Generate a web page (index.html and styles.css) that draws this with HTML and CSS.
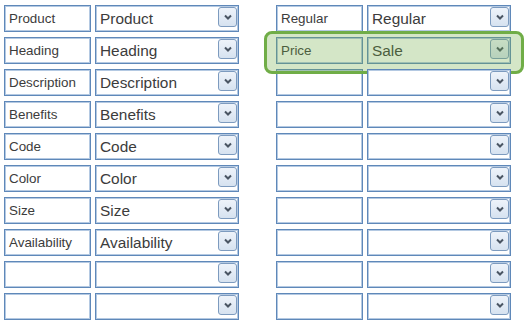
FILE: index.html
```html
<!DOCTYPE html>
<html>
<head>
    <title>Field Mapping</title>
    <link rel="stylesheet" href="styles.css">
</head>
<body>
    <div class="mapping">
        <div class="column">
            <div class="row"><div class="box name">Product</div><div class="box pick">Product<span class="arrow"><svg viewBox="0 0 8 6"><path d="M1 1.5 L4 4.5 L7 1.5" /></svg></span></div></div>
            <div class="row"><div class="box name">Heading</div><div class="box pick">Heading<span class="arrow"><svg viewBox="0 0 8 6"><path d="M1 1.5 L4 4.5 L7 1.5" /></svg></span></div></div>
            <div class="row"><div class="box name">Description</div><div class="box pick">Description<span class="arrow"><svg viewBox="0 0 8 6"><path d="M1 1.5 L4 4.5 L7 1.5" /></svg></span></div></div>
            <div class="row"><div class="box name">Benefits</div><div class="box pick">Benefits<span class="arrow"><svg viewBox="0 0 8 6"><path d="M1 1.5 L4 4.5 L7 1.5" /></svg></span></div></div>
            <div class="row"><div class="box name">Code</div><div class="box pick">Code<span class="arrow"><svg viewBox="0 0 8 6"><path d="M1 1.5 L4 4.5 L7 1.5" /></svg></span></div></div>
            <div class="row"><div class="box name">Color</div><div class="box pick">Color<span class="arrow"><svg viewBox="0 0 8 6"><path d="M1 1.5 L4 4.5 L7 1.5" /></svg></span></div></div>
            <div class="row"><div class="box name">Size</div><div class="box pick">Size<span class="arrow"><svg viewBox="0 0 8 6"><path d="M1 1.5 L4 4.5 L7 1.5" /></svg></span></div></div>
            <div class="row"><div class="box name">Availability</div><div class="box pick">Availability<span class="arrow"><svg viewBox="0 0 8 6"><path d="M1 1.5 L4 4.5 L7 1.5" /></svg></span></div></div>
            <div class="row"><div class="box name"></div><div class="box pick"><span class="arrow"><svg viewBox="0 0 8 6"><path d="M1 1.5 L4 4.5 L7 1.5" /></svg></span></div></div>
            <div class="row"><div class="box name"></div><div class="box pick"><span class="arrow"><svg viewBox="0 0 8 6"><path d="M1 1.5 L4 4.5 L7 1.5" /></svg></span></div></div>
        </div>

        <div class="column">
            <div class="row"><div class="box name">Regular</div><div class="box pick">Regular<span class="arrow"><svg viewBox="0 0 8 6"><path d="M1 1.5 L4 4.5 L7 1.5" /></svg></span></div></div>
            <div class="row selected"><div class="box name">Price</div><div class="box pick">Sale<span class="arrow"><svg viewBox="0 0 8 6"><path d="M1 1.5 L4 4.5 L7 1.5" /></svg></span></div><div class="highlight"></div></div>
            <div class="row"><div class="box name"></div><div class="box pick"><span class="arrow"><svg viewBox="0 0 8 6"><path d="M1 1.5 L4 4.5 L7 1.5" /></svg></span></div></div>
            <div class="row"><div class="box name"></div><div class="box pick"><span class="arrow"><svg viewBox="0 0 8 6"><path d="M1 1.5 L4 4.5 L7 1.5" /></svg></span></div></div>
            <div class="row"><div class="box name"></div><div class="box pick"><span class="arrow"><svg viewBox="0 0 8 6"><path d="M1 1.5 L4 4.5 L7 1.5" /></svg></span></div></div>
            <div class="row"><div class="box name"></div><div class="box pick"><span class="arrow"><svg viewBox="0 0 8 6"><path d="M1 1.5 L4 4.5 L7 1.5" /></svg></span></div></div>
            <div class="row"><div class="box name"></div><div class="box pick"><span class="arrow"><svg viewBox="0 0 8 6"><path d="M1 1.5 L4 4.5 L7 1.5" /></svg></span></div></div>
            <div class="row"><div class="box name"></div><div class="box pick"><span class="arrow"><svg viewBox="0 0 8 6"><path d="M1 1.5 L4 4.5 L7 1.5" /></svg></span></div></div>
            <div class="row"><div class="box name"></div><div class="box pick"><span class="arrow"><svg viewBox="0 0 8 6"><path d="M1 1.5 L4 4.5 L7 1.5" /></svg></span></div></div>
            <div class="row"><div class="box name"></div><div class="box pick"><span class="arrow"><svg viewBox="0 0 8 6"><path d="M1 1.5 L4 4.5 L7 1.5" /></svg></span></div></div>
        </div>
    </div>
</body>
</html>
```

FILE: styles.css
```css
* {
    margin: 0;
    padding: 0;
    box-sizing: border-box;
    font-family: "Liberation Sans", Arial, sans-serif;
}

body {
    background-color: #fff;
    overflow: hidden;
}

.mapping {
    display: flex;
    gap: 37px;
    padding: 5px 0 0 4px;
}

.column {
    display: flex;
    flex-direction: column;
    gap: 5px;
}

.row {
    display: flex;
    gap: 4px;
}

.box {
    height: 27px;
    border: 1px solid #5f88b9;
    box-shadow: inset 0 0 0 1px #b4c9e2;
    background: #fff;
    color: #3c3c3c;
    display: flex;
    align-items: center;
    white-space: nowrap;
}

.name {
    width: 87px;
    font-size: 13.4px;
    padding-left: 4px;
}

.pick {
    width: 144px;
    font-size: 15.4px;
    padding-left: 4px;
    position: relative;
}

.arrow {
    position: absolute;
    right: 1px;
    top: 1px;
    width: 19px;
    height: 20px;
    border: 1px solid #7d9bbf;
    border-radius: 3px;
    background: linear-gradient(#eef3fa, #d6e2f0);
    display: flex;
    justify-content: center;
    align-items: center;
}

.arrow svg {
    width: 8px;
    height: 6px;
}

.arrow path {
    fill: none;
    stroke: #4a5563;
    stroke-width: 2;
}

.selected {
    position: relative;
}

.highlight {
    position: absolute;
    top: -6px;
    bottom: -10px;
    left: -12px;
    right: -13px;
    border: 3px solid #70ad47;
    border-radius: 8px;
    background: rgba(112, 173, 71, 0.3);
}
```
